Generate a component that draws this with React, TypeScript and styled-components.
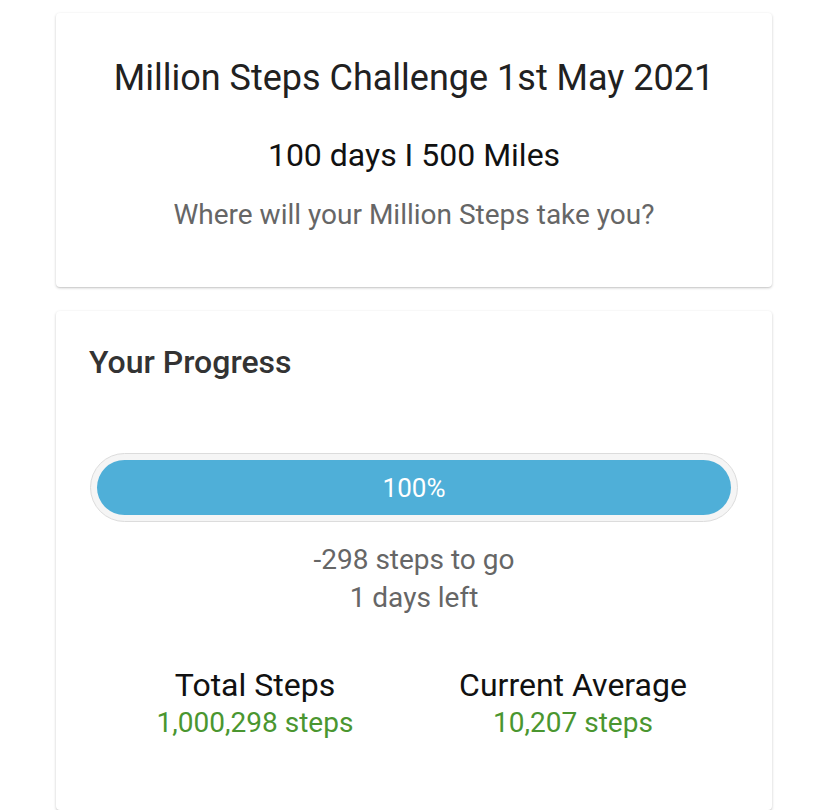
import React from 'react';
import styled, { createGlobalStyle } from 'styled-components';

const GlobalStyle = createGlobalStyle`
  body {
    margin: 0;
    background: #ffffff;
    font-family: Roboto, "Noto Sans", sans-serif;
  }
`;

const Page = styled.div`
  display: flex;
  flex-direction: column;
  gap: 24px;
  padding: 13px 56px 0;
  height: 797px;
  overflow: hidden;
`;

const Card = styled.section`
  background: #fff;
  border-radius: 4px;
  box-shadow: 0 1px 3px rgba(0, 0, 0, 0.2), 0 1px 1px rgba(0, 0, 0, 0.06);
`;

const IntroCard = styled(Card)`
  padding: 44px 24px 56px;
  text-align: center;
`;

const Title = styled.h1`
  margin: 0;
  font-size: 36px;
  line-height: 42px;
  font-weight: 400;
  color: #212121;
`;

const Subtitle = styled.h2`
  margin: 37px 0 0;
  font-size: 32px;
  line-height: 38px;
  font-weight: 400;
  color: #111;
`;

const Tagline = styled.p`
  margin: 25px 0 0;
  font-size: 28px;
  line-height: 32px;
  color: #666;
`;

const ProgressCard = styled(Card)`
  flex: 1;
  padding: 32px 34px 0;
`;

const CardHeading = styled.h3`
  margin: 0 0 0 -1px;
  font-size: 32px;
  line-height: 38px;
  font-weight: 500;
  color: #333;
`;

const Track = styled.div`
  margin-top: 72px;
  height: 69px;
  box-sizing: border-box;
  padding: 6px;
  border: 1px solid #dcdcdc;
  border-radius: 35px;
  background: #f5f5f5;
`;

const Fill = styled.div`
  height: 100%;
  border-radius: 28px;
  background: #4fafd8;
  color: #fff;
  font-size: 26px;
  display: flex;
  align-items: center;
  justify-content: center;
`;

const Remaining = styled.div`
  margin-top: 19px;
  text-align: center;
  font-size: 28px;
  line-height: 38px;
  color: #666;
`;

const Stats = styled.div`
  margin-top: 49px;
  display: grid;
  grid-template-columns: 318px 318px;
  justify-content: center;
  text-align: center;
`;

const StatLabel = styled.div`
  font-size: 32px;
  line-height: 38px;
  color: #111;
`;

const StatValue = styled.div`
  font-size: 28px;
  line-height: 38px;
  color: #4a9630;
`;

const stats = [
  { label: 'Total Steps', value: '1,000,298 steps' },
  { label: 'Current Average', value: '10,207 steps' },
];

const App: React.FC = () => {
  const percent = 100;
  return (
    <>
      <GlobalStyle />
      <Page>
        <IntroCard>
          <Title>Million Steps Challenge 1st May 2021</Title>
          <Subtitle>100 days I 500 Miles</Subtitle>
          <Tagline>Where will your Million Steps take you?</Tagline>
        </IntroCard>
        <ProgressCard>
          <CardHeading>Your Progress</CardHeading>
          <Track>
            <Fill style={{ width: `${percent}%` }}>{percent}%</Fill>
          </Track>
          <Remaining>
            <div>-298 steps to go</div>
            <div>1 days left</div>
          </Remaining>
          <Stats>
            {stats.map((s) => (
              <div key={s.label}>
                <StatLabel>{s.label}</StatLabel>
                <StatValue>{s.value}</StatValue>
              </div>
            ))}
          </Stats>
        </ProgressCard>
      </Page>
    </>
  );
};

export default App;
